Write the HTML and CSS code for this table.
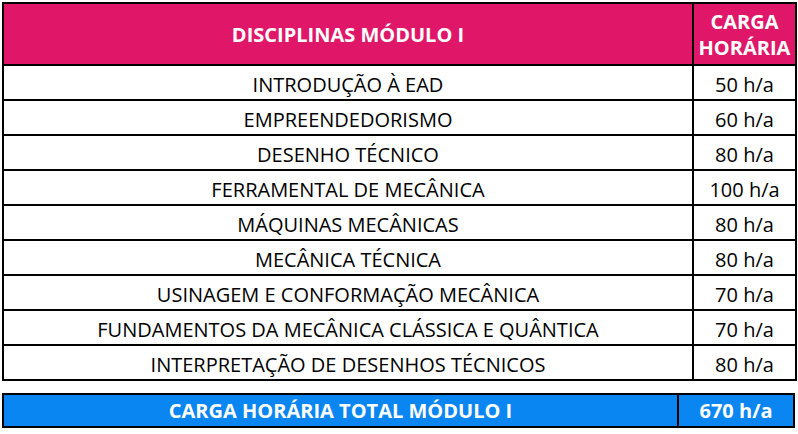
FILE: index.html
```html
<!DOCTYPE html>
<html lang="pt-BR">
<head>
<meta charset="utf-8">
<link rel="stylesheet" href="styles.css">
</head>
<body>
<div class="page">
<table class="grid">
  <colgroup><col class="c1"><col class="c2"></colgroup>
  <thead>
    <tr><th>DISCIPLINAS MÓDULO I</th><th class="hrs">CARGA<br>HORÁRIA</th></tr>
  </thead>
  <tbody>
    <tr><td>INTRODUÇÃO À EAD</td><td>50 h/a</td></tr>
    <tr><td>EMPREENDEDORISMO</td><td>60 h/a</td></tr>
    <tr><td>DESENHO TÉCNICO</td><td>80 h/a</td></tr>
    <tr><td>FERRAMENTAL DE MECÂNICA</td><td>100 h/a</td></tr>
    <tr><td>MÁQUINAS MECÂNICAS</td><td>80 h/a</td></tr>
    <tr><td>MECÂNICA TÉCNICA</td><td>80 h/a</td></tr>
    <tr><td>USINAGEM E CONFORMAÇÃO MECÂNICA</td><td>70 h/a</td></tr>
    <tr><td>FUNDAMENTOS DA MECÂNICA CLÁSSICA E QUÂNTICA</td><td>70 h/a</td></tr>
    <tr><td>INTERPRETAÇÃO DE DESENHOS TÉCNICOS</td><td>80 h/a</td></tr>
  </tbody>
</table>
<div class="total">
  <div class="t-label">CARGA HORÁRIA TOTAL MÓDULO I</div>
  <div class="t-value">670 h/a</div>
</div>
</div>
</body>
</html>
```

FILE: styles.css
```css
html, body { margin: 0; padding: 0; background: #ffffff; }
body { font-family: "Open Sans", "Noto Sans", sans-serif; color: #000; }
.page { padding: 2px 3px 0 2px; width: 793px; }
.grid {
  border-collapse: collapse;
  width: 793px;
  table-layout: fixed;
  border: 2px solid #000;
}
.c1 { width: 690px; }
.c2 { width: 103px; }
.grid th, .grid td {
  border: 2px solid #000;
  padding: 0;
  text-align: center;
  font-size: 20px;
}
.grid th {
  background: #e01768;
  color: #fff;
  font-weight: 700;
  height: 59px;
  line-height: 26px;
  padding-top: 1px;
}
.grid td {
  height: 29px;
  line-height: 24px;
  padding-top: 4px;
  font-weight: 400;
}
.total {
  margin-top: 12px;
  width: 789px;
  height: 31px;
  display: flex;
  border: 2px solid #000;
  background: #0a86f2;
  color: #fff;
  font-weight: 700;
  font-size: 20px;
}
.t-label {
  width: 673px;
  border-right: 2px solid #000;
  display: flex;
  align-items: center;
  justify-content: center;
}
.t-value {
  flex: 1;
  display: flex;
  align-items: center;
  justify-content: center;
}
```
